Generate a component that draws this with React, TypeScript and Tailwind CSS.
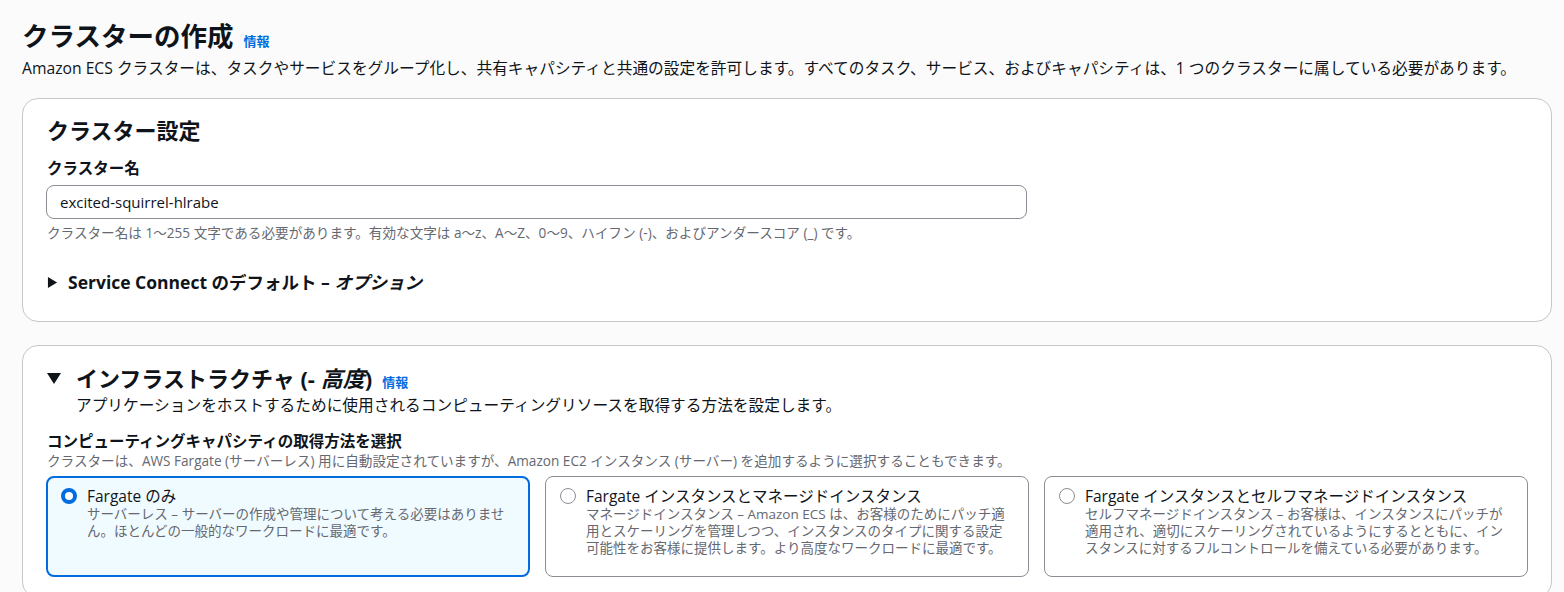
import React from "react";

const font = {
  fontFamily: '"Open Sans", "Noto Sans CJK JP", sans-serif',
};

const CaretRight = () => (
  <svg viewBox="0 0 12 14" className="h-[13px] w-[11px]">
    <path d="M1 1 L11 7 L1 13 Z" fill="#0f141a" />
  </svg>
);

const CaretDown = () => (
  <svg viewBox="0 0 14 12" className="h-[12px] w-[14px]">
    <path d="M0 1 L14 1 L7 12 Z" fill="#0f141a" />
  </svg>
);

interface OptionProps {
  title: string;
  desc: string;
  selected?: boolean;
}

const CapacityOption = ({ title, desc, selected }: OptionProps) => {
  return (
    <div
      className={
        selected
          ? "h-[101px] rounded-lg border-2 border-[#006ce0] bg-[#f0fbff] pl-[13px] pr-[16px] pt-[8px]"
          : "h-[101px] rounded-lg border border-[#8c8c94] bg-white pl-[14px] pr-[17px] pt-[9px]"
      }
    >
      <div className="flex gap-[10px]">
        <div className="flex h-[20px] shrink-0 items-center">
          {selected ? (
            <span className="block h-[16px] w-[16px] rounded-full border-[4px] border-[#006ce0] bg-white" />
          ) : (
            <span className="block h-[16px] w-[16px] rounded-full border-[1.5px] border-[#8c8c94] bg-white" />
          )}
        </div>
        <div>
          <p className="text-[15.5px] leading-[20px] text-[#0f141a]">{title}</p>
          <p className="text-[13.5px] leading-[17px] text-[#656871]">{desc}</p>
        </div>
      </div>
    </div>
  );
};

export default function App() {
  return (
    <div
      style={font}
      className="min-h-[592px] bg-[#fbfbfb] pl-[22px] pr-[12px] pt-[18px] pb-[20px] text-[#0f141a]"
    >
      {/* PAGE HEADER */}
      <div className="flex items-baseline gap-[10px]">
        <h1 className="text-[26.5px] font-bold leading-[36px]">クラスターの作成</h1>
        <a className="text-[13px] font-bold text-[#006ce0]">情報</a>
      </div>
      <p className="mt-[4px] text-[15.7px] leading-[20px]">
        Amazon ECS クラスターは、タスクやサービスをグループ化し、共有キャパシティと共通の設定を許可します。すべてのタスク、サービス、およびキャパシティは、1 つのクラスターに属している必要があります。
      </p>

      {/* CLUSTER SETTINGS */}
      <div className="mt-[20px] rounded-2xl border border-[#c6c6cd] bg-white px-[24px] pt-[16px] pb-[28px]">
        <h2 className="text-[22px] font-bold leading-[30px]">クラスター設定</h2>
        <p className="mt-[13px] text-[15.5px] font-bold leading-[20px]">クラスター名</p>
        <div className="-ml-[1px] mt-[7px] flex h-[34px] w-[981px] items-center rounded-lg border border-[#8c8c94] bg-white px-[13px] text-[15px]">
          excited-squirrel-hlrabe
        </div>
        <p className="mt-[6px] text-[13.6px] leading-[16px] text-[#656871]">
          クラスター名は 1〜255 文字である必要があります。有効な文字は a〜z、A〜Z、0〜9、ハイフン (-)、およびアンダースコア (_) です。
        </p>
        <div className="mt-[30px] flex items-center gap-[10px]">
          <CaretRight />
          <p className="text-[17.5px] font-bold leading-[22px]">
            Service Connect のデフォルト – <i>オプション</i>
          </p>
        </div>
      </div>

      {/* INFRASTRUCTURE */}
      <div className="mt-[23px] rounded-2xl border border-[#c6c6cd] bg-white px-[24px] pt-[18px] pb-[20px]">
        <div className="flex items-center gap-[15px]">
          <CaretDown />
          <div className="flex items-baseline gap-[10px]">
            <h2 className="text-[22px] font-bold leading-[28px]">
              インフラストラクチャ (- <i>高度</i>)
            </h2>
            <a className="text-[13px] font-bold text-[#006ce0]">情報</a>
          </div>
        </div>
        <p className="mt-[2px] pl-[29px] text-[15.7px] leading-[20px]">
          アプリケーションをホストするために使用されるコンピューティングリソースを取得する方法を設定します。
        </p>
        <p className="mt-[16px] text-[15.5px] font-bold leading-[20px]">
          コンピューティングキャパシティの取得方法を選択
        </p>
        <p className="mt-[2px] text-[13.6px] leading-[16px] text-[#656871]">
          クラスターは、AWS Fargate (サーバーレス) 用に自動設定されていますが、Amazon EC2 インスタンス (サーバー) を追加するように選択することもできます。
        </p>
        <div className="-mx-[1px] mt-[7px] grid grid-cols-3 gap-[15px]">
          <CapacityOption
            selected
            title="Fargate のみ"
            desc="サーバーレス – サーバーの作成や管理について考える必要はありません。ほとんどの一般的なワークロードに最適です。"
          />
          <CapacityOption
            title="Fargate インスタンスとマネージドインスタンス"
            desc="マネージドインスタンス – Amazon ECS は、お客様のためにパッチ適用とスケーリングを管理しつつ、インスタンスのタイプに関する設定可能性をお客様に提供します。より高度なワークロードに最適です。"
          />
          <CapacityOption
            title="Fargate インスタンスとセルフマネージドインスタンス"
            desc="セルフマネージドインスタンス – お客様は、インスタンスにパッチが適用され、適切にスケーリングされているようにするとともに、インスタンスに対するフルコントロールを備えている必要があります。"
          />
        </div>
      </div>
    </div>
  );
}
